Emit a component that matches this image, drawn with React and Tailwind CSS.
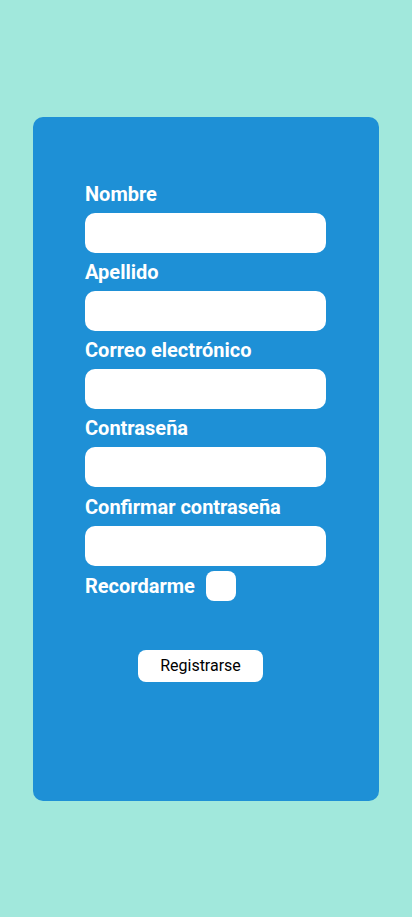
export default function App() {
  const fields = [
    ["Nombre", "h-[38px]"],
    ["Apellido", "h-[38px]"],
    ["Correo electrónico", "h-[38px]"],
    ["Contraseña", "h-[38px]"],
    ["Confirmar contraseña", "h-[39px]"],
  ];
  return (
    <div className="min-h-[917px] w-[412px] bg-[#a1e8dc] pt-[117px] pl-[33px]" style={{ fontFamily: "Roboto, 'Liberation Sans', sans-serif" }}>
      <div className="w-[346px] h-[684px] rounded-[10px] bg-[#1e90d6] pt-[58px] pl-[52px] flex flex-col">
        {fields.map(([f, h]) => (
          <div key={f} className="flex flex-col">
            <div className={`${h} flex items-center text-white font-bold text-[20px] leading-none`}>{f}</div>
            <div className="w-[241px] h-[40px] bg-white rounded-[10px]" />
          </div>
        ))}
        <div className="flex items-center mt-[5px] h-[30px]">
          <span className="text-white font-bold text-[20px] leading-none">Recordarme</span>
          <div className="ml-[11px] w-[30px] h-[30px] bg-white rounded-[8px]" />
        </div>
        <div className="mt-[49px] ml-[53px] w-[125px] h-[32px] bg-white rounded-[8px] flex items-center justify-center text-black text-[16px]">
          Registrarse
        </div>
      </div>
    </div>
  );
}
